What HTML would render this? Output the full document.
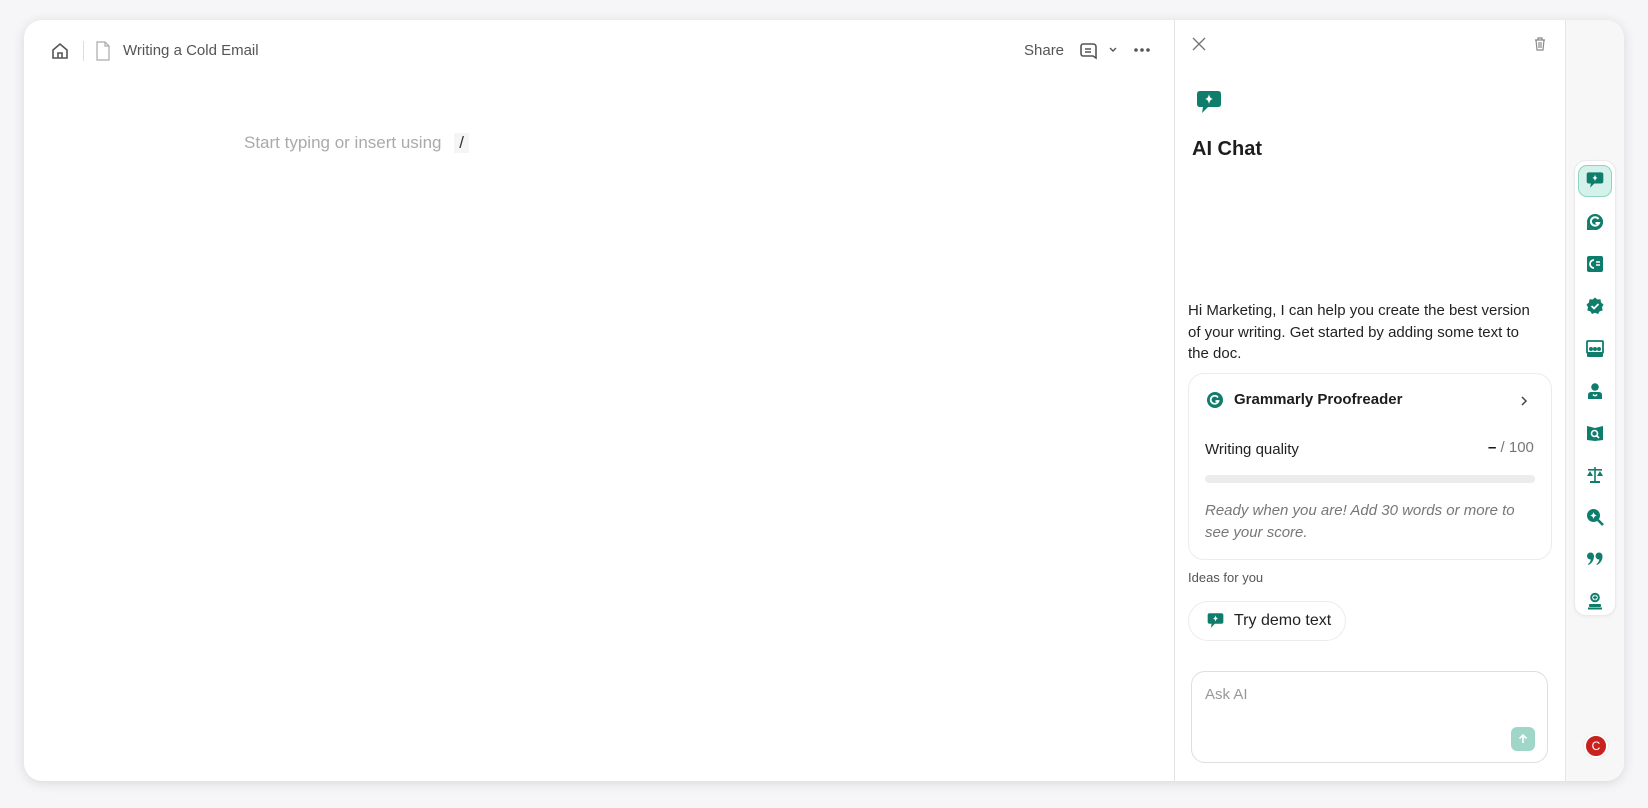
<!DOCTYPE html>
<html><head><meta charset="utf-8"><style>
*{box-sizing:border-box;margin:0;padding:0}
body{width:1648px;height:808px;background:#f6f6f8;font-family:"Liberation Sans",sans-serif;position:relative;overflow:hidden}
.card{position:absolute;left:24px;top:20px;width:1600px;height:761px;background:#fff;border-radius:18px;box-shadow:0 2px 12px rgba(0,0,0,.12);overflow:hidden}
.a{position:absolute}
.rail{position:absolute;left:1541px;top:0;width:59px;height:761px;background:#f7f7f8;border-left:1px solid #e6e6e8}
.div{position:absolute;left:1150px;top:0;width:1px;height:761px;background:#e4e4e6}
.t{position:absolute;white-space:nowrap}
</style></head><body>
<div class="card">
<svg class="a" style="left:26px;top:21px" width="20" height="20" viewBox="0 0 20 20" fill="none" stroke="#555" stroke-width="1.6"><path d="M3 9 L10 3 L17 9 V17 H3 Z"/><path d="M8 17 V12 H12 V17"/></svg>
<div class="a" style="left:59px;top:21px;width:1px;height:20px;background:#ddd"></div>
<svg class="a" style="left:71px;top:21px" width="16" height="20" viewBox="0 0 16 20" fill="none" stroke="#aaa" stroke-width="1.2"><path d="M2 1 H10 L14 5 V19 H2 Z M10 1 V5 H14"/></svg>
<div class="t" style="left:99px;top:22px;font-size:15px;color:#555">Writing a Cold Email</div>
<div class="t" style="left:1000px;top:22px;font-size:15px;color:#555">Share</div>
<svg class="a" style="left:1055px;top:21px" width="20" height="20" viewBox="0 0 20 20" fill="none" stroke="#555" stroke-width="1.6"><path d="M4 3 H14 Q17 3 17 6 V17 L14 15 H4 Q2 15 2 12 V6 Q2 3 4 3Z"/><path d="M6 8 H12 M6 11 H12"/></svg>
<svg class="a" style="left:1084px;top:26px" width="10" height="8" viewBox="0 0 10 8" fill="none" stroke="#555" stroke-width="1.4"><path d="M2 2 L5 5 L8 2"/></svg>
<svg class="a" style="left:1110px;top:27px" width="16" height="6"><circle cx="2" cy="3" r="1.8" fill="#555"/><circle cx="8" cy="3" r="1.8" fill="#555"/><circle cx="14" cy="3" r="1.8" fill="#555"/></svg>
<div class="t" style="left:220px;top:113px;font-size:17px;color:#aaa">Start typing or insert using <span style="display:inline-block;background:#f5f5f5;color:#333;padding:0 5px;margin-left:8px">/</span></div>
<div class="div"></div>
<svg class="a" style="left:1168px;top:17px" width="14" height="14" viewBox="0 0 14 14" stroke="#777" stroke-width="1.4"><path d="M1 1 L13 13 M13 1 L1 13"/></svg>
<svg class="a" style="left:1510px;top:17px" width="12" height="14" viewBox="0 0 12 14" fill="none" stroke="#888" stroke-width="1.2"><path d="M1 3 H11 M4 3 V1 H8 V3 M2 3 L3 13 H9 L10 3 M5 5 V11 M7 5 V11"/></svg>
<svg class="a" style="left:1172px;top:69px" width="26" height="26" viewBox="0 0 26 26"><path d="M4 2 H22 Q25 2 25 5 V15 Q25 18 22 18 H12 L6 24 L7 18 H4 Q1 18 1 15 V5 Q1 2 4 2Z" fill="#0f7d6b"/><path d="M13 5 Q13.6 9.4 17 10 Q13.6 10.6 13 15 Q12.4 10.6 9 10 Q12.4 9.4 13 5Z" fill="#fff"/></svg>
<div class="t" style="left:1168px;top:118px;font-size:20px;font-weight:bold;color:#1d1d1d">AI Chat</div>
<div class="a" style="left:1164px;top:280px;width:350px;font-size:15px;line-height:21.5px;color:#222">Hi Marketing, I can help you create the best version of your writing. Get started by adding some text to the doc.</div>
<div class="a" style="left:1164px;top:353px;width:364px;height:187px;border:1px solid #ececee;border-radius:16px"></div>
<svg class="a" style="left:1183px;top:372px" width="16" height="16" viewBox="0 0 16 16"><circle cx="8" cy="8" r="8" fill="#0f7d6b"/><path d="M11 5.5 A4 4 0 1 0 11.5 9 H8.5" fill="none" stroke="#fff" stroke-width="1.8"/></svg>
<div class="t" style="left:1210px;top:371px;font-size:15px;font-weight:bold;color:#1d1d1d">Grammarly Proofreader</div>
<svg class="a" style="left:1496px;top:375px" width="8" height="12" viewBox="0 0 8 12" fill="none" stroke="#444" stroke-width="1.5"><path d="M2 2 L6 6 L2 10"/></svg>
<div class="t" style="left:1181px;top:421px;font-size:15px;color:#222">Writing quality</div>
<div class="t" style="left:1464px;top:419px;font-size:15px;color:#777"><b style="color:#111">–</b> / 100</div>
<div class="a" style="left:1181px;top:455px;width:330px;height:8px;border-radius:4px;background:#ececec"></div>
<div class="a" style="left:1181px;top:480px;width:320px;font-size:15px;line-height:22px;font-style:italic;color:#777">Ready when you are! Add 30 words or more to see your score.</div>
<div class="t" style="left:1164px;top:550px;font-size:13px;color:#555">Ideas for you</div>
<div class="a" style="left:1164px;top:581px;width:158px;height:40px;border:1px solid #ececee;border-radius:20px"></div>
<svg class="a" style="left:1183px;top:592px" width="17" height="17" viewBox="0 0 26 26"><path d="M4 2 H22 Q25 2 25 5 V15 Q25 18 22 18 H12 L6 24 L7 18 H4 Q1 18 1 15 V5 Q1 2 4 2Z" fill="#0f7d6b"/><path d="M13 5 Q13.6 9.4 17 10 Q13.6 10.6 13 15 Q12.4 10.6 9 10 Q12.4 9.4 13 5Z" fill="#fff"/></svg>
<div class="t" style="left:1210px;top:592px;font-size:16px;color:#222">Try demo text</div>
<div class="a" style="left:1167px;top:651px;width:357px;height:92px;border:1px solid #dedee0;border-radius:14px"></div>
<div class="t" style="left:1181px;top:666px;font-size:15px;color:#999">Ask AI</div>
<div class="a" style="left:1487px;top:707px;width:24px;height:24px;border-radius:6px;background:#9fd6c8"></div>
<svg class="a" style="left:1493px;top:713px" width="12" height="12" viewBox="0 0 12 12" fill="none" stroke="#fff" stroke-width="1.6"><path d="M6 10 V2 M2.5 5.5 L6 2 L9.5 5.5"/></svg>
<div class="rail">
<div class="a" style="left:8px;top:140px;width:42px;height:456px;background:#fff;border:1px solid #ebebed;border-radius:12px;box-shadow:0 1px 3px rgba(0,0,0,.05)"></div>
<div class="a" style="left:12px;top:145px;width:34px;height:32px;background:#d4f1ea;border:1px solid #8fd3c1;border-radius:9px"></div>
<svg class="a" style="left:20px;top:151px" width="18" height="18" viewBox="0 0 26 26"><path d="M4 2 H22 Q25 2 25 5 V15 Q25 18 22 18 H12 L6 24 L7 18 H4 Q1 18 1 15 V5 Q1 2 4 2Z" fill="#0f7d6b"/><path d="M13 5 Q13.6 9.4 17 10 Q13.6 10.6 13 15 Q12.4 10.6 9 10 Q12.4 9.4 13 5Z" fill="#fff"/></svg>
<svg class="a" style="left:20px;top:193px" width="18" height="18" viewBox="0 0 18 18"><path d="M9 1 A8 8 0 1 1 1 9 V17 H9" fill="#0f7d6b"/><circle cx="9" cy="9" r="8" fill="#0f7d6b"/><path d="M12.5 6 A4.2 4.2 0 1 0 13 10 H9.5" fill="none" stroke="#fff" stroke-width="2"/></svg>
<svg class="a" style="left:20px;top:235px" width="18" height="18" viewBox="0 0 18 18"><rect x="1" y="1" width="16" height="16" rx="2" fill="#0f7d6b"/><path d="M8 5 A4 4 0 1 0 8 13" fill="none" stroke="#fff" stroke-width="1.8"/><path d="M10 7 H14 M10 10 H14" stroke="#fff" stroke-width="1.5"/></svg>
<svg class="a" style="left:20px;top:277px" width="18" height="18" viewBox="0 0 18 18"><path d="M9 0.5 L11.3 2.5 L14.5 2.3 L15 5.5 L17.5 7.5 L16 10.3 L16.7 13.4 L13.6 14.4 L12 17 L9 15.8 L6 17 L4.4 14.4 L1.3 13.4 L2 10.3 L0.5 7.5 L3 5.5 L3.5 2.3 L6.7 2.5Z" fill="#0f7d6b"/><path d="M5.5 9 L8 11.5 L12.5 7" fill="none" stroke="#fff" stroke-width="1.8"/></svg>
<svg class="a" style="left:20px;top:320px" width="18" height="18" viewBox="0 0 18 18"><rect x="1" y="1" width="16" height="12" rx="1" fill="none" stroke="#0f7d6b" stroke-width="1.8"/><circle cx="5" cy="9" r="2" fill="#0f7d6b"/><circle cx="9" cy="9" r="2" fill="#0f7d6b"/><circle cx="13" cy="9" r="2" fill="#0f7d6b"/><rect x="1" y="12" width="16" height="5" rx="1" fill="#0f7d6b"/></svg>
<svg class="a" style="left:20px;top:362px" width="18" height="18" viewBox="0 0 18 18"><circle cx="9" cy="5" r="3.8" fill="#0f7d6b"/><path d="M2 17 V13 Q2 10 5 10 H13 Q16 10 16 13 V17Z" fill="#0f7d6b"/><path d="M7 12.5 Q9 15 11 12.5" stroke="#fff" stroke-width="1.5" fill="none"/></svg>
<svg class="a" style="left:20px;top:404px" width="18" height="18" viewBox="0 0 18 18"><path d="M1 2 L9 4 L17 2 V16 L9 17 L1 16Z" fill="#0f7d6b"/><circle cx="8.5" cy="9.5" r="3" fill="none" stroke="#fff" stroke-width="1.6"/><path d="M10.5 11.5 L13 14" stroke="#fff" stroke-width="1.6"/></svg>
<svg class="a" style="left:20px;top:446px" width="18" height="18" viewBox="0 0 18 18" fill="#0f7d6b"><rect x="8.2" y="1" width="1.6" height="14"/><rect x="2" y="3" width="14" height="1.6"/><rect x="4" y="15" width="10" height="2"/><path d="M1 10 L4 5 L7 10Z M11 10 L14 5 L17 10Z"/></svg>
<svg class="a" style="left:20px;top:488px" width="18" height="18" viewBox="0 0 18 18"><circle cx="7.5" cy="7.5" r="6.5" fill="#0f7d6b"/><path d="M12 12 L17 17" stroke="#0f7d6b" stroke-width="2.6"/><path d="M7.5 4 Q8 7 11 7.5 Q8 8 7.5 11 Q7 8 4 7.5 Q7 7 7.5 4Z" fill="#fff"/></svg>
<svg class="a" style="left:20px;top:530px" width="18" height="18" viewBox="0 0 18 18" fill="#0f7d6b"><circle cx="4.5" cy="6" r="3.5"/><path d="M8 6 Q8 12 2.5 15 L2 14 Q5 12 5 8Z"/><circle cx="13" cy="6" r="3.5"/><path d="M16.5 6 Q16.5 12 11 15 L10.5 14 Q13.5 12 13.5 8Z"/></svg>
<svg class="a" style="left:20px;top:572px" width="18" height="18" viewBox="0 0 18 18"><circle cx="9" cy="5.5" r="3.8" fill="none" stroke="#0f7d6b" stroke-width="2"/><path d="M9 3.5 V7.5 M7 5.5 H11" stroke="#0f7d6b" stroke-width="1.5"/><rect x="3" y="12" width="12" height="3" rx="1" fill="#0f7d6b"/><rect x="2" y="15.5" width="14" height="2" fill="#0f7d6b"/></svg>
<div class="a" style="left:18px;top:714px;width:24px;height:24px;border-radius:50%;background:#c9211e;border:2px solid #fff;box-shadow:0 0 0 1px #eee;color:#fff;font-size:12px;text-align:center;line-height:20px">C</div>
</div>
</div>
</body></html>
